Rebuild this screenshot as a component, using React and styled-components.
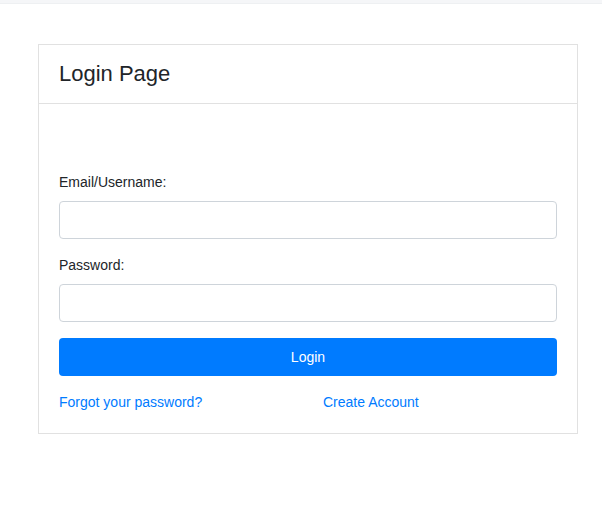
import React from "react";
import styled, { createGlobalStyle } from "styled-components";

const GlobalStyle = createGlobalStyle`
  html, body {
    margin: 0;
    padding: 0;
    background: #ffffff;
  }
  body {
    font-family: "Liberation Sans", Arial, sans-serif;
    font-size: 14px;
    line-height: 1.5;
    color: #212529;
  }
  * { box-sizing: border-box; }
`;

const TopBar = styled.div`
  height: 4px;
  background: #f5f6f8;
  border-bottom: 1px solid #eef0f2;
`;

const Page = styled.main`
  padding: 40px 0 0 38px;
`;

const Card = styled.section`
  width: 540px;
  border: 1px solid #e1e1e1;
  background: #fff;
`;

const CardHeader = styled.header`
  padding: 16px 20px;
  border-bottom: 1px solid #e1e1e1;
`;

const Title = styled.h1`
  margin: 0;
  font-size: 22px;
  line-height: 26px;
  font-weight: 400;
  color: #212529;
`;

const CardBody = styled.div`
  padding: 20px;
`;

const Form = styled.form`
  margin-top: 48px;
  display: flex;
  flex-direction: column;
`;

const Group = styled.div`
  margin-bottom: 16px;
`;

const Label = styled.label`
  display: block;
  font-size: 14px;
  line-height: 21px;
  margin-bottom: 8px;
  color: #212529;
`;

const Input = styled.input`
  display: block;
  width: 100%;
  height: 38px;
  padding: 6px 12px;
  font-family: inherit;
  font-size: 14px;
  border: 1px solid #ced4da;
  border-radius: 4px;
  background: #fff;
  outline: none;
`;

const Button = styled.button`
  display: block;
  width: 100%;
  height: 38px;
  border: none;
  border-radius: 4px;
  background: #007bff;
  color: #fff;
  font-family: inherit;
  font-size: 14px;
  line-height: 21px;
  cursor: pointer;
`;

const LinkRow = styled.div`
  margin-top: 16px;
  margin-right: -15px;
  display: grid;
  grid-template-columns: 1fr 1fr;
  column-gap: 15px;
  line-height: 21px;
`;

const Link = styled.a`
  color: #007bff;
  text-decoration: none;
  font-size: 14px;
`;

export default function App() {
  return (
    <>
      <GlobalStyle />
      <TopBar />
      <Page>
        <Card>
          <CardHeader>
            <Title>Login Page</Title>
          </CardHeader>
          <CardBody>
            <Form onSubmit={(e) => e.preventDefault()}>
              <Group>
                <Label htmlFor="user">Email/Username:</Label>
                <Input id="user" type="text" />
              </Group>
              <Group>
                <Label htmlFor="pass">Password:</Label>
                <Input id="pass" type="password" />
              </Group>
              <Button type="submit">Login</Button>
              <LinkRow>
                <div>
                  <Link href="#">Forgot your password?</Link>
                </div>
                <div>
                  <Link href="#">Create Account</Link>
                </div>
              </LinkRow>
            </Form>
          </CardBody>
        </Card>
      </Page>
    </>
  );
}
